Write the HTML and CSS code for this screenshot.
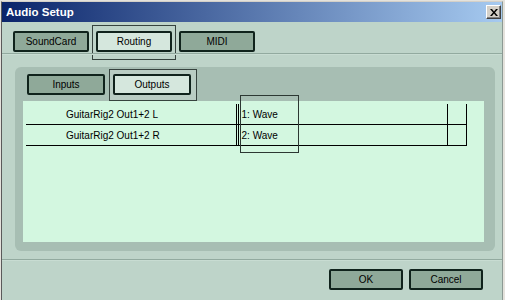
FILE: index.html
```html
<!DOCTYPE html>
<html lang="en">
<head>
    <meta charset="UTF-8">
    <title>Audio Setup</title>
    <link rel="stylesheet" href="styles.css">
</head>
<body>
    <div class="window">
        <div class="frame">
            <div class="titlebar">
                <span class="title">Audio Setup</span>
                <span class="close">
                    <svg width="8" height="7" viewBox="0 0 8 7"><path d="M0 0h2l2 2.5L6 0h2L5 3.5 8 7H6L4 4.5 2 7H0l3-3.5z" fill="#000"/></svg>
                </span>
            </div>
            <div class="content">
                <div class="tabs">
                    <div class="btn">SoundCard</div>
                    <div class="btn active">Routing</div>
                    <div class="btn">MIDI</div>
                </div>
                <div class="sep"></div>
                <div class="panel">
                    <div class="subtabs">
                        <div class="btn wide">Inputs</div>
                        <div class="btn wide active sub">Outputs</div>
                    </div>
                    <div class="list">
                        <div class="row">
                            <div class="c1">GuitarRig2 Out1+2 L</div>
                            <div class="c2">1: Wave</div>
                            <div class="c3"></div>
                        </div>
                        <div class="row">
                            <div class="c1">GuitarRig2 Out1+2 R</div>
                            <div class="c2">2: Wave</div>
                            <div class="c3"></div>
                        </div>
                        <div class="focus"></div>
                    </div>
                </div>
                <div class="sep low"></div>
                <div class="footer">
                    <div class="btn small">OK</div>
                    <div class="btn small">Cancel</div>
                </div>
            </div>
        </div>
    </div>
</body>
</html>
```

FILE: styles.css
```css
*{
    margin: 0;
    padding: 0;
    box-sizing: border-box;
}
body{
    background: #d4d0c8;
    font-family: "Liberation Sans", Arial, sans-serif;
    font-size: 10px;
    color: #000;
}
.window{
    width: 505px;
    height: 300px;
    padding: 1px 2px 0 1px;
    background: #e4e2dc;
}
.frame{
    height: 100%;
    display: flex;
    flex-direction: column;
    border-left: 1px solid #5a5a5a;
    border-right: 1px solid #8c9a94;
    border-top: 1px solid #d4d0c8;
}
.titlebar{
    height: 20px;
    display: flex;
    align-items: center;
    justify-content: space-between;
    padding: 0 1px 0 4px;
    background: linear-gradient(to right, #0a246a, #a6caf0);
}
.title{
    color: #fff;
    font-weight: bold;
    font-size: 11.5px;
}
.close{
    width: 15px;
    height: 14px;
    display: flex;
    align-items: center;
    justify-content: center;
    background: #d4d0c8;
    border: 1px solid;
    border-color: #fff #404040 #404040 #fff;
    box-shadow: inset -1px -1px 0 #808080;
}
.content{
    flex: 1;
    display: flex;
    flex-direction: column;
    background: #bed4c9;
    position: relative;
    z-index: 0;
}
.tabs{
    display: flex;
    gap: 7px;
    padding: 9px 0 0 11px;
}
.btn{
    height: 21px;
    width: 76px;
    display: flex;
    align-items: center;
    justify-content: center;
    background: #8fa999;
    border: 2px solid #10231c;
    border-radius: 2px;
    position: relative;
}
.btn.active{
    background: #d5e7dd;
}
.btn.active::before{
    content: "";
    position: absolute;
    top: -8px;
    left: -6px;
    right: -6px;
    bottom: -10px;
    border: 1px solid #36433e;
    z-index: -1;
}
.btn.sub::before{
    top: -7px;
    right: -8px;
    bottom: -8px;
    background: #b9cdc3;
}
.sep{
    height: 2px;
    margin-top: 1px;
    border-top: 1px solid #92aa9f;
    border-bottom: 1px solid #c8dcd2;
}
.sep.low{
    margin-top: 8px;
}
.panel{
    margin: 12px 7px 0 13px;
    padding: 7px 11px 9px 8px;
    background: #a7beb3;
    border-radius: 6px;
    position: relative;
    z-index: 0;
}
.subtabs{
    display: flex;
    gap: 8px;
    margin-left: 4px;
}
.btn.wide{
    width: 78px;
}
.list{
    margin-top: 6px;
    height: 141px;
    padding: 3px 0 0 3px;
    background: #d3f7e0;
    position: relative;
}
.row{
    display: flex;
    width: 441px;
    height: 21px;
    border-bottom: 1px solid #000;
}
.c1,.c2,.c3{
    display: flex;
    align-items: center;
}
.c1{
    width: 211px;
    padding-left: 40px;
    border-right: 1px solid #000;
}
.c2{
    width: 211px;
    margin-left: 1px;
    padding-left: 3px;
    border-left: 1px solid #000;
    border-right: 1px solid #000;
}
.c3{
    width: 19px;
    border-right: 1px solid #000;
}
.focus{
    position: absolute;
    top: -6px;
    left: 217px;
    width: 59px;
    height: 58px;
    border: 1px solid #2c3833;
}
.footer{
    display: flex;
    justify-content: flex-end;
    gap: 6px;
    padding: 8px 19px 0 0;
}
.btn.small{
    width: 74px;
}
```
